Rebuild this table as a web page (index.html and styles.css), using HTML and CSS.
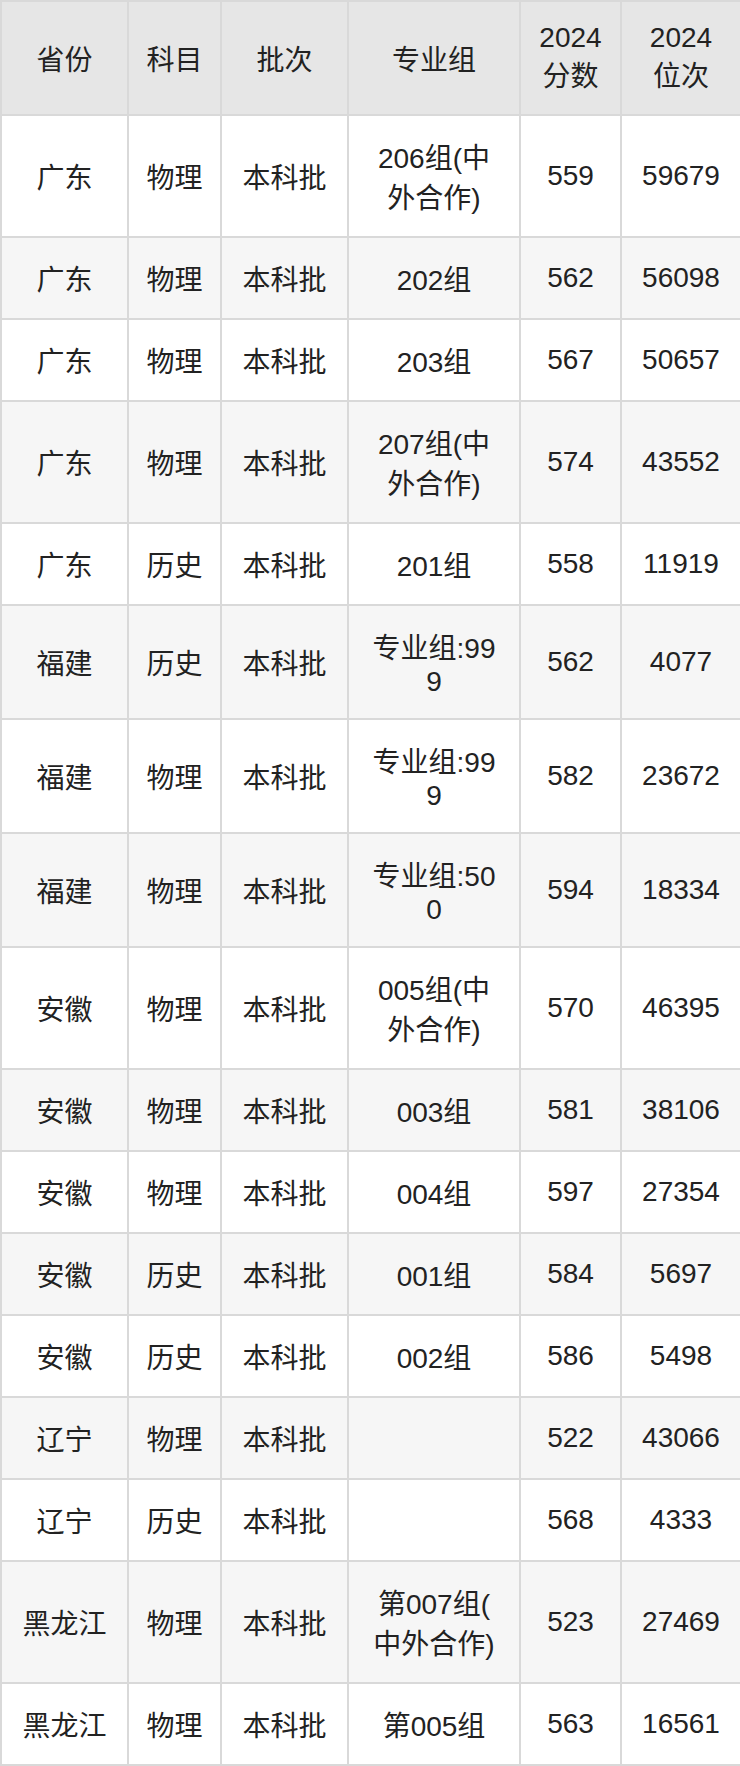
FILE: index.html
```html
<!DOCTYPE html>
<html lang="zh-CN">
<head>
<meta charset="utf-8">
<link rel="stylesheet" href="styles.css">
</head>
<body>
<table class="score-table">
  <colgroup>
    <col class="c1"><col class="c2"><col class="c3"><col class="c4"><col class="c5"><col class="c6">
  </colgroup>
  <thead>
    <tr><th>省份</th><th>科目</th><th>批次</th><th>专业组</th><th>2024<br>分数</th><th>2024<br>位次</th></tr>
  </thead>
  <tbody>
    <tr><td>广东</td><td>物理</td><td>本科批</td><td class="grp">206组(中外合作)</td><td>559</td><td>59679</td></tr>
    <tr><td>广东</td><td>物理</td><td>本科批</td><td class="grp">202组</td><td>562</td><td>56098</td></tr>
    <tr><td>广东</td><td>物理</td><td>本科批</td><td class="grp">203组</td><td>567</td><td>50657</td></tr>
    <tr><td>广东</td><td>物理</td><td>本科批</td><td class="grp">207组(中外合作)</td><td>574</td><td>43552</td></tr>
    <tr><td>广东</td><td>历史</td><td>本科批</td><td class="grp">201组</td><td>558</td><td>11919</td></tr>
    <tr><td>福建</td><td>历史</td><td>本科批</td><td class="grp">专业组:999</td><td>562</td><td>4077</td></tr>
    <tr><td>福建</td><td>物理</td><td>本科批</td><td class="grp">专业组:999</td><td>582</td><td>23672</td></tr>
    <tr><td>福建</td><td>物理</td><td>本科批</td><td class="grp">专业组:500</td><td>594</td><td>18334</td></tr>
    <tr><td>安徽</td><td>物理</td><td>本科批</td><td class="grp">005组(中外合作)</td><td>570</td><td>46395</td></tr>
    <tr><td>安徽</td><td>物理</td><td>本科批</td><td class="grp">003组</td><td>581</td><td>38106</td></tr>
    <tr><td>安徽</td><td>物理</td><td>本科批</td><td class="grp">004组</td><td>597</td><td>27354</td></tr>
    <tr><td>安徽</td><td>历史</td><td>本科批</td><td class="grp">001组</td><td>584</td><td>5697</td></tr>
    <tr><td>安徽</td><td>历史</td><td>本科批</td><td class="grp">002组</td><td>586</td><td>5498</td></tr>
    <tr><td>辽宁</td><td>物理</td><td>本科批</td><td class="grp"></td><td>522</td><td>43066</td></tr>
    <tr><td>辽宁</td><td>历史</td><td>本科批</td><td class="grp"></td><td>568</td><td>4333</td></tr>
    <tr><td>黑龙江</td><td>物理</td><td>本科批</td><td class="grp">第007组(中外合作)</td><td>523</td><td>27469</td></tr>
    <tr><td>黑龙江</td><td>物理</td><td>本科批</td><td class="grp">第005组</td><td>563</td><td>16561</td></tr>
  </tbody>
</table>
</body>
</html>
```
FILE: styles.css
```css
html, body {
  margin: 0;
  padding: 0;
  background: #ffffff;
}

.score-table {
  width: 740px;
  table-layout: fixed;
  border-collapse: collapse;
  font-family: "Liberation Sans", "Noto Sans CJK SC", sans-serif;
  font-size: 28px;
  line-height: normal;
  color: #222222;
}

.c1 { width: 127px; }
.c2 { width: 93px; }
.c3 { width: 127px; }
.c4 { width: 172px; }
.c5 { width: 101px; }
.c6 { width: 120px; }

.score-table th,
.score-table td {
  border: 2px solid #d9d9d9;
  padding: 20px 17px;
  text-align: center;
  vertical-align: middle;
  font-weight: normal;
}

.score-table td.grp {
  line-break: anywhere;
  word-break: break-all;
}

.score-table th {
  background: #e6e6e6;
}

.score-table tbody tr:nth-child(even) td {
  background: #f6f6f6;
}
```
